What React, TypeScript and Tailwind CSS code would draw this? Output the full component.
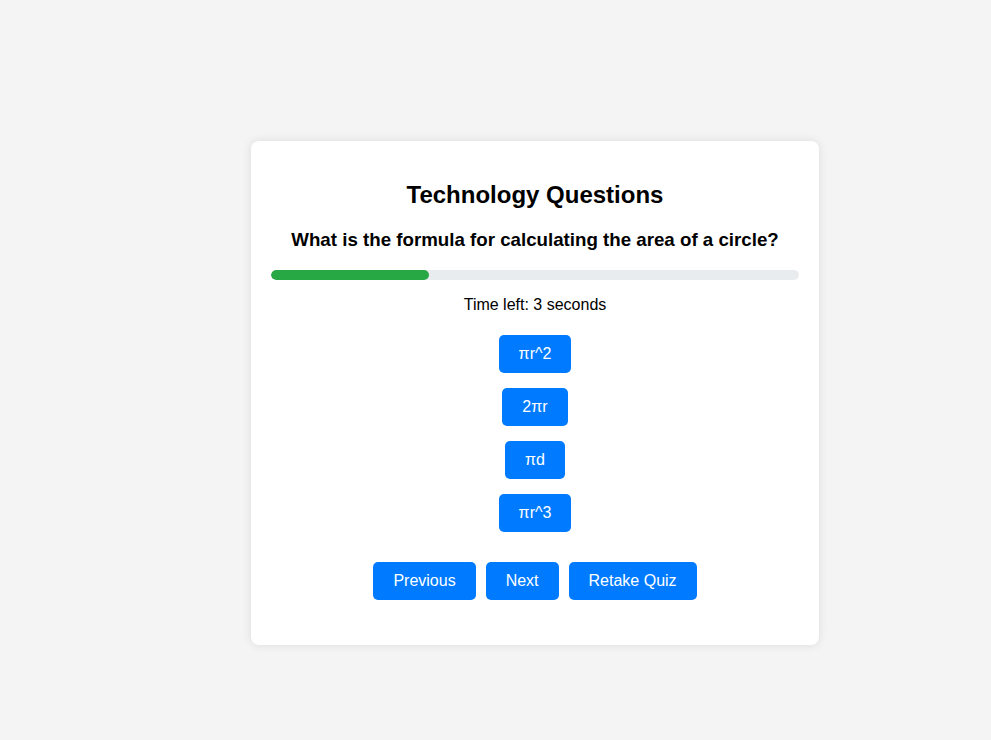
import { useState } from "react";

const question = {
  category: "Technology Questions",
  text: "What is the formula for calculating the area of a circle?",
  options: ["πr^2", "2πr", "πd", "πr^3"],
};

export default function App() {
  const [selected, setSelected] = useState<string | null>(null);
  const progress = 30;

  return (
    <div className="min-h-screen w-full bg-[#f4f4f4] pl-[251px] pt-[141px] font-['Liberation_Sans',Arial,sans-serif] text-black">
      <div className="w-[568px] rounded-lg bg-white px-5 pb-[45px] pt-5 text-center shadow-[0_0_10px_rgba(0,0,0,0.1)]">
        <h2 className="mt-5 text-[24px] font-bold leading-[28px]">
          {question.category}
        </h2>
        <h3 className="mt-5 text-[18.72px] font-bold leading-[22px]">
          {question.text}
        </h3>

        <div className="mt-[19px] h-[10px] w-full overflow-hidden rounded-[5px] bg-[#e9ecef]">
          <div
            className="h-full rounded-[5px] bg-[#28a745]"
            style={{ width: `${progress}%` }}
          />
        </div>

        <p className="mt-4 text-[16px] leading-[18px]">Time left: 3 seconds</p>

        <div className="mt-[21px] flex flex-col items-center gap-[15px]">
          {question.options.map((option) => (
            <button
              key={option}
              type="button"
              onClick={() => setSelected(option)}
              className={`h-[38px] rounded-[5px] px-5 text-[16px] leading-[18px] text-white ${
                selected === option ? "bg-[#0056b3]" : "bg-[#007bff]"
              }`}
            >
              {option}
            </button>
          ))}
        </div>

        <div className="mt-[30px] flex justify-center gap-[10px]">
          <button
            type="button"
            className="h-[38px] rounded-[5px] bg-[#007bff] px-5 text-[16px] leading-[18px] text-white"
          >
            Previous
          </button>
          <button
            type="button"
            className="h-[38px] rounded-[5px] bg-[#007bff] px-5 text-[16px] leading-[18px] text-white"
          >
            Next
          </button>
          <button
            type="button"
            className="h-[38px] rounded-[5px] bg-[#007bff] px-5 text-[16px] leading-[18px] text-white"
          >
            Retake Quiz
          </button>
        </div>
      </div>
    </div>
  );
}
